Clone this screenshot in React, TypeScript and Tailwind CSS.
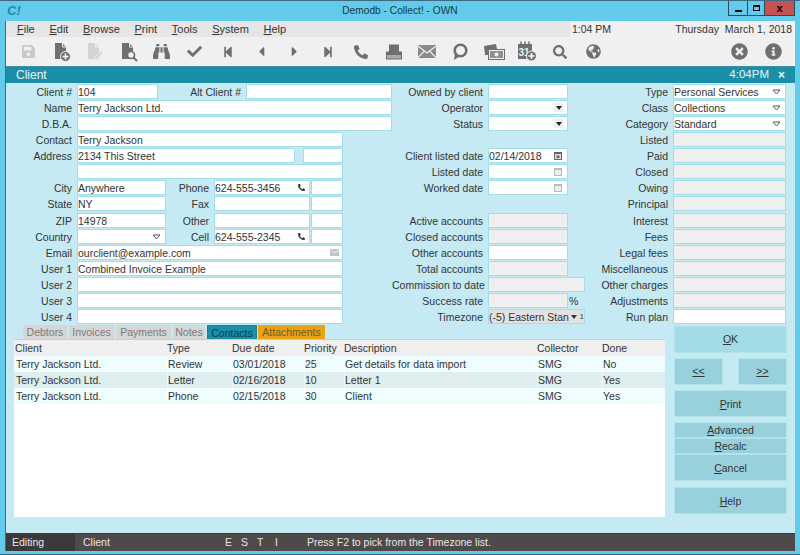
import type { ReactNode } from "react";
import {
  FaBinoculars,
  FaCaretLeft,
  FaCaretRight,
  FaCheck,
  FaGlobeAmericas,
  FaInfoCircle,
  FaPhoneAlt,
  FaSave,
  FaSearch,
  FaStepBackward,
  FaStepForward,
  FaTimesCircle,
} from "react-icons/fa";

const FIELD = "h-[15px] mt-px border border-[#a3dde9] leading-[13px] whitespace-nowrap overflow-hidden flex items-center justify-between";

function Field({ width, value, tone = "white", icon, className = "" }: {
  width: string;
  value?: string;
  tone?: "white" | "gray";
  icon?: ReactNode;
  className?: string;
}) {
  const bg = tone === "white" ? "bg-white" : "bg-[#efefef]";
  return (
    <div className={`${FIELD} ${bg} ${width} ${className}`}>
      <span className="self-start pt-px">{value}</span>
      {icon}
    </div>
  );
}

function Label({ width, children }: { width: string; children?: ReactNode }) {
  return <div className={`${width} shrink-0 text-right pr-[5px] pt-px leading-4 whitespace-nowrap`}>{children}</div>;
}

const Drop = () => (
  <svg width="9" height="6" viewBox="0 0 9 6" className="mr-1 shrink-0"><path d="M1 1h7L4.5 5z" fill="none" stroke="#555" /></svg>
);
const DropDark = () => (
  <span className="mr-1 w-[9px] h-[9px] bg-[#efefef] flex items-center justify-center shrink-0">
    <svg width="6" height="4" viewBox="0 0 6 4"><path d="M0 0h6L3 4z" fill="#222" /></svg>
  </span>
);
const Cal = ({ dark }: { dark?: boolean }) => (
  <svg width="8" height="9" viewBox="0 0 8 9" className="mr-[5px] shrink-0">
    <rect x="0.5" y="1.5" width="7" height="7" fill={dark ? "#ddd" : "#eee"} stroke={dark ? "#666" : "#bbb"} />
    <rect x="0.5" y="1" width="7" height="2" fill={dark ? "#666" : "#bbb"} />
    {dark && <rect x="2.5" y="4.5" width="3" height="2.5" fill="#666" />}
  </svg>
);
const Tel = () => <FaPhoneAlt size={7} className="mr-1 text-[#333] shrink-0" />;
const Mail = () => (
  <svg width="9" height="7" viewBox="0 0 9 7" className="mr-[3px] shrink-0"><rect width="9" height="7" fill="#c4c4c4" /><path d="M0 1l4.5 3L9 1" fill="none" stroke="#eee" /></svg>
);

function LeftRow({ label, children }: { label?: string; children: ReactNode }) {
  return (
    <div className="flex h-4">
      <Label width="w-[71px]">{label}</Label>
      {children}
    </div>
  );
}

function PhoneRow({ label, sub, value, phone, icon }: { label: string; sub: string; value?: string; phone?: string; icon?: ReactNode }) {
  return (
    <LeftRow label={label}>
      <Field width="w-[89px]" value={value} />
      <Label width="w-[48px]">{sub}</Label>
      <Field width="w-[96px]" value={phone} icon={icon} />
      <Field width="w-[32px]" className="ml-px" />
    </LeftRow>
  );
}

function MidRow({ label, children }: { label?: string; children?: ReactNode }) {
  return (
    <div className="flex h-4">
      <Label width="w-[96px]">{label}</Label>
      {children}
    </div>
  );
}

function RightRow({ label, value, tone = "gray", icon }: { label: string; value?: string; tone?: "white" | "gray"; icon?: ReactNode }) {
  return (
    <div className="flex h-4 justify-end">
      <Label width="w-[88px]">{label}</Label>
      <Field width="w-[113px]" value={value} tone={tone} icon={icon} />
    </div>
  );
}

const GRAY = "#6f6f6f";

function DocIcon({ color = GRAY, children }: { color?: string; children?: ReactNode }) {
  return (
    <svg width="20" height="20" viewBox="0 0 20 20">
      <path d="M3 1h7l4 4v12H3z" fill={color} />
      <path d="M10.5 1v4h4" fill="none" stroke="#f0f0f0" />
      {children}
    </svg>
  );
}

const tool_icons: ReactNode[] = [
  <FaSave key="save" size={15} color="#c9c9c9" />,
  <DocIcon key="new">
    <circle cx="13.5" cy="14.5" r="5" fill={GRAY} stroke="#f0f0f0" />
    <path d="M13.5 11.5v6M10.5 14.5h6" stroke="#fff" strokeWidth="1.5" />
  </DocIcon>,
  <DocIcon key="edit" color="#d4d4d4">
    <path d="M9 18l1-3 6-6 2 2-6 6z" fill="#d4d4d4" stroke="#f0f0f0" strokeWidth="0.7" />
  </DocIcon>,
  <DocIcon key="find">
    <circle cx="12" cy="13" r="3.5" fill="#f0f0f0" stroke={GRAY} strokeWidth="1.6" />
    <path d="M14.5 15.5l3.5 3.5" stroke={GRAY} strokeWidth="2" />
  </DocIcon>,
  <FaBinoculars key="bin" size={17} color={GRAY} />,
  <FaCheck key="check" size={15} color={GRAY} />,
  <FaStepBackward key="first" size={12} color={GRAY} />,
  <FaCaretLeft key="prev" size={15} color={GRAY} />,
  <FaCaretRight key="next" size={15} color={GRAY} />,
  <FaStepForward key="last" size={12} color={GRAY} />,
  <FaPhoneAlt key="phone" size={14} color={GRAY} />,
  <svg key="stamp" width="16" height="16" viewBox="0 0 16 16">
    <rect x="3" y="0.5" width="10" height="8" fill={GRAY} />
    <rect x="0.5" y="8" width="15" height="7" fill="#a8a8a8" stroke={GRAY} />
    <rect x="0.5" y="8" width="15" height="3" fill={GRAY} />
  </svg>,
  <svg key="mail" width="18" height="13" viewBox="0 0 18 13">
    <rect width="18" height="13" fill="#8a8a8a" />
    <path d="M0 1l9 7 9-7M0 12.5l6.5-6.5M18 12.5L11.5 6" fill="none" stroke="#f0f0f0" strokeWidth="1.1" />
  </svg>,
  <svg key="chat" width="16" height="18" viewBox="0 0 16 18">
    <circle cx="8.5" cy="7.5" r="5.8" fill="none" stroke={GRAY} strokeWidth="2.6" />
    <path d="M3 10l-1 7 6-4z" fill={GRAY} />
  </svg>,
  <svg key="cards" width="22" height="18" viewBox="0 0 22 18">
    <path d="M1 3l12-2 1 5H5v6H2z" fill={GRAY} />
    <rect x="5.5" y="6.5" width="16" height="10" fill="#f0f0f0" stroke={GRAY} />
    <rect x="7" y="8" width="13" height="7" fill="#909090" />
    <circle cx="13.5" cy="11.5" r="2" fill="#f0f0f0" />
  </svg>,
  <svg key="cal" width="20" height="21" viewBox="0 0 20 21">
    <path d="M1 3h14v15H1z" fill={GRAY} />
    <path d="M4 0.5v4M8 0.5v4M12 0.5v4" stroke={GRAY} strokeWidth="1.5" />
    <text x="1.5" y="14.5" fontSize="10" fontWeight="700" fill="#f0f0f0" fontFamily="Liberation Sans, sans-serif">31</text>
    <circle cx="14.5" cy="15" r="5" fill={GRAY} stroke="#f0f0f0" />
    <path d="M14.5 12v6M11.5 15h6" stroke="#fff" strokeWidth="1.5" />
  </svg>,
  <FaSearch key="search" size={14} color={GRAY} />,
  <FaGlobeAmericas key="globe" size={15} color={GRAY} />,
];

const menu_items = [
  ["F", "ile"],
  ["E", "dit"],
  ["B", "rowse"],
  ["P", "rint"],
  ["T", "ools"],
  ["S", "ystem"],
  ["H", "elp"],
];

const contacts = [
  { client: "Terry Jackson Ltd.", type: "Review", due: "03/01/2018", priority: "25", description: "Get details for data import", collector: "SMG", done: "No", bg: "bg-[#effdfe]" },
  { client: "Terry Jackson Ltd.", type: "Letter", due: "02/16/2018", priority: "10", description: "Letter 1", collector: "SMG", done: "Yes", bg: "bg-[#deeeee]" },
  { client: "Terry Jackson Ltd.", type: "Phone", due: "02/15/2018", priority: "30", description: "Client", collector: "SMG", done: "Yes", bg: "bg-[#effdfe]" },
];

const TABLE_GRID = "grid grid-cols-[152px_65px_72px_40px_193px_65px_63px] h-4 leading-4";

function Tab({ children, tone = "bg-[#d6d6d6] text-[#7a7a7a]", width }: { children: string; tone?: string; width: string }) {
  return <div className={`${tone} ${width} h-[14px] leading-[14px] text-center`}>{children}</div>;
}

function Btn({ children, height, tone = "bg-[#98d0dc]", width = "w-full", className = "" }: { children: ReactNode; height: string; tone?: string; width?: string; className?: string }) {
  return (
    <button className={`${tone} ${height} ${width} ${className} border border-[#b2e2ea] text-[#333] flex items-center justify-center`}>
      {children}
    </button>
  );
}

export default function App() {
  return (
    <div
      className="w-[800px] h-[555px] bg-[#62cbeb] border-t border-[#3d6a80] flex flex-col text-[10.5px] text-[#333] overflow-hidden"
      style={{ fontFamily: '"Liberation Sans", Arial, sans-serif' }}
    >
      {/* title bar */}
      <div className="h-5 grid grid-cols-[1fr_auto_1fr] items-start shrink-0 text-[10.2px] text-[#1b3a44]">
        <div className="pl-[7px] pt-[2px] font-bold italic text-[13px] text-[#1b8ea8] leading-4">C!</div>
        <div className="pt-[2px] leading-4">Demodb - Collect! - OWN</div>
        <div className="flex justify-end pr-[5px]">
          <div className="flex h-[15px] border border-t-0 border-[#2c4a58] text-[11px]">
            <div className="w-[19px] flex items-end justify-center pb-[3px] border-r border-[#2c4a58]"><div className="w-[7px] h-[2px] bg-black" /></div>
            <div className="w-[17px] flex items-center justify-center border-r border-[#2c4a58]"><div className="w-[7px] h-[6px] border border-t-2 border-black" /></div>
            <div className="w-[29px] bg-[#c75050] flex items-center justify-center font-bold text-black leading-none">x</div>
          </div>
        </div>
      </div>

      <div className="mx-[5px] border-l border-[#3d6a80] flex-1 flex flex-col min-h-0">
        {/* menu */}
        <div className="h-4 flex shrink-0 bg-[#f0f0f0]">
          <div className="w-[564px] bg-[#e6e6e6] flex pl-[11px] gap-[14.7px] leading-4 text-[11px]">
            {menu_items.map(([key, rest]) => (
              <span key={key}><span className="underline">{key}</span>{rest}</span>
            ))}
          </div>
          <div className="flex-1 flex justify-between pr-[3px] pl-[2px] leading-4">
            <span>1:04 PM</span>
            <span>Thursday&nbsp; March 1, 2018</span>
          </div>
        </div>

        {/* toolbar */}
        <div className="h-[29px] bg-[#f0f0f0] flex items-center pl-[6.4px] shrink-0">
          {tool_icons.map((icon, i) => (
            <div key={i} className="w-[33.2px] flex items-center justify-center">{icon}</div>
          ))}
          <div className="ml-auto flex gap-[17px] pr-[13px]">
            <FaTimesCircle size={17} color={GRAY} />
            <FaInfoCircle size={17} color={GRAY} />
          </div>
        </div>

        {/* form header */}
        <div className="h-[17px] bg-[#1b8ea8] text-[#e8f8fa] flex items-center justify-between pl-[10px] pr-[10px] text-[12px] shrink-0 border-t border-[#3d8ea5]">
          <span>Client</span>
          <span className="flex items-center gap-[9px]">
            <span className="text-[11.5px]">4:04PM</span>
            <span className="font-bold">×</span>
          </span>
        </div>

        <div className="flex-1 bg-[#c5eaf3] flex flex-col min-h-0">
          {/* fields, the rows below the eighth sit one pixel lower in all three columns */}
          <div className="flex [&>div>*:nth-child(8)]:mb-px">
            <div className="w-[386px] shrink-0">
              <LeftRow label="Client #">
                <Field width="w-[81px]" value="104" />
                <Label width="w-[88px]">Alt Client #</Label>
                <Field width="w-[146px]" />
              </LeftRow>
              <LeftRow label="Name"><Field width="w-[315px]" value="Terry Jackson Ltd." /></LeftRow>
              <LeftRow label="D.B.A."><Field width="w-[315px]" /></LeftRow>
              <LeftRow label="Contact"><Field width="w-[266px]" value="Terry Jackson" /></LeftRow>
              <LeftRow label="Address">
                <Field width="w-[218px]" value="2134 This Street" />
                <Field width="w-[40px]" className="ml-2" />
              </LeftRow>
              <LeftRow><Field width="w-[266px]" /></LeftRow>
              <PhoneRow label="City" value="Anywhere" sub="Phone" phone="624-555-3456" icon={<Tel />} />
              <PhoneRow label="State" value="NY" sub="Fax" />
              <PhoneRow label="ZIP" value="14978" sub="Other" />
              <LeftRow label="Country">
                <Field width="w-[89px]" icon={<Drop />} />
                <Label width="w-[48px]">Cell</Label>
                <Field width="w-[96px]" value="624-555-2345" icon={<Tel />} />
                <Field width="w-[32px]" className="ml-px" />
              </LeftRow>
              <LeftRow label="Email"><Field width="w-[266px]" value="ourclient@example.com" icon={<Mail />} /></LeftRow>
              <LeftRow label="User 1"><Field width="w-[266px]" value="Combined Invoice Example" /></LeftRow>
              <LeftRow label="User 2"><Field width="w-[266px]" /></LeftRow>
              <LeftRow label="User 3"><Field width="w-[266px]" /></LeftRow>
              <LeftRow label="User 4"><Field width="w-[266px]" /></LeftRow>
            </div>

            <div className="w-[193px] shrink-0">
              <MidRow label="Owned by client"><Field width="w-[80px]" /></MidRow>
              <MidRow label="Operator"><Field width="w-[80px]" icon={<DropDark />} /></MidRow>
              <MidRow label="Status"><Field width="w-[80px]" icon={<DropDark />} /></MidRow>
              <MidRow />
              <MidRow label="Client listed date"><Field width="w-[80px]" value="02/14/2018" icon={<Cal dark />} /></MidRow>
              <MidRow label="Listed date"><Field width="w-[80px]" icon={<Cal />} /></MidRow>
              <MidRow label="Worked date"><Field width="w-[80px]" icon={<Cal />} /></MidRow>
              <MidRow />
              <MidRow label="Active accounts"><Field width="w-[80px]" tone="gray" /></MidRow>
              <MidRow label="Closed accounts"><Field width="w-[80px]" tone="gray" /></MidRow>
              <MidRow label="Other accounts"><Field width="w-[80px]" /></MidRow>
              <MidRow label="Total accounts"><Field width="w-[80px]" tone="gray" /></MidRow>
              <MidRow label="Commission to date"><Field width="w-[97px]" tone="gray" /></MidRow>
              <MidRow label="Success rate">
                <Field width="w-[80px]" tone="gray" />
                <span className="ml-px pt-px leading-4">%</span>
              </MidRow>
              <MidRow label="Timezone">
                <div className={`${FIELD} w-[97px] bg-[#e2e2e2] border-[#8fc6d3]`}>
                  <span className="self-start pt-px overflow-hidden">(-5) Eastern Stan</span>
                  <svg width="8" height="6" viewBox="0 0 8 6" className="shrink-0"><path d="M1 1h6L4 5z" fill="#333" /></svg>
                  <span className="shrink-0 text-[8px]">1</span>
                </div>
              </MidRow>
            </div>

            <div className="w-[201px] shrink-0">
              <RightRow label="Type" value="Personal Services" tone="white" icon={<Drop />} />
              <RightRow label="Class" value="Collections" tone="white" icon={<Drop />} />
              <RightRow label="Category" value="Standard" tone="white" icon={<Drop />} />
              {["Listed", "Paid", "Closed", "Owing", "Principal", "Interest", "Fees", "Legal fees", "Miscellaneous", "Other charges", "Adjustments"].map((label) => (
                <RightRow key={label} label={label} />
              ))}
              <RightRow label="Run plan" tone="white" />
            </div>
          </div>

          {/* contacts + buttons */}
          <div className="flex flex-1 min-h-0">
            <div className="w-[663px] shrink-0 flex flex-col">
              <div className="flex gap-[2px] pl-[17px] mt-px">
                <Tab width="w-[44px]">Debtors</Tab>
                <Tab width="w-[45px]">Invoices</Tab>
                <Tab width="w-[55px]">Payments</Tab>
                <Tab width="w-[32px]">Notes</Tab>
                <Tab width="w-[50px]" tone="bg-[#1b8ea8] text-[#0f3a46] border-t border-x border-[#1b7f97] leading-[12px]">Contacts</Tab>
                <Tab width="w-[67px]" tone="bg-[#e8a317] text-[#6f5a25] -ml-px">Attachments</Tab>
              </div>
              <div className="ml-[8px] w-[651px] h-[178px] bg-white border-t border-[#a3dde9]">
                <div className={`${TABLE_GRID} bg-[#efefef] pl-px`}>
                  <span>Client</span>
                  <span>Type</span>
                  <span>Due date</span>
                  <span>Priority</span>
                  <span>Description</span>
                  <span>Collector</span>
                  <span>Done</span>
                </div>
                {contacts.map((row) => (
                  <div key={row.due} className={`${TABLE_GRID} ${row.bg} pl-[2px] [&>span:not(:last-child)]:border-r [&>span:not(:last-child)]:border-white/60`}>
                    <span>{row.client}</span>
                    <span>{row.type}</span>
                    <span>{row.due}</span>
                    <span>{row.priority}</span>
                    <span>{row.description}</span>
                    <span>{row.collector}</span>
                    <span>{row.done}</span>
                  </div>
                ))}
              </div>
            </div>

            <div className="w-[113px] shrink-0 ml-[5px] pt-[2px] flex flex-col">
              <Btn height="h-[27px]" tone="bg-[#a3dce6]"><span><u>O</u>K</span></Btn>
              <div className="flex justify-between mt-[5px]">
                <Btn height="h-[27px]" width="w-[49px]"><u>&lt;&lt;</u></Btn>
                <Btn height="h-[27px]" width="w-[49px]"><u>&gt;&gt;</u></Btn>
              </div>
              <Btn height="h-[27px]" className="mt-[5px] pt-[2px]"><span><u>P</u>rint</span></Btn>
              <Btn height="h-4" className="mt-[5px] pt-[2px]"><span><u>A</u>dvanced</span></Btn>
              <Btn height="h-4" className="pt-[2px]"><span><u>R</u>ecalc</span></Btn>
              <Btn height="h-[27px]" className="pt-[2px]"><span><u>C</u>ancel</span></Btn>
              <Btn height="h-[27px]" className="mt-[6px] pt-[2px]"><span><u>H</u>elp</span></Btn>
            </div>
          </div>
        </div>

        {/* status bar */}
        <div className="h-[18px] bg-[#4d4a49] text-[#e6e6e6] flex items-center shrink-0 border-t border-[#3a3a38] text-[10.5px]">
          <div className="w-[69px] h-full bg-[#3a3a38] pl-[6px] leading-[17px]">Editing</div>
          <div className="w-[147px] pl-[8px]">Client</div>
          <div className="w-[85px] pl-[3px] grid grid-cols-[16px_16px_16px_16px]">
            <span>E</span><span>S</span><span>T</span><span className="pl-[2px]">I</span>
          </div>
          <div>Press F2 to pick from the Timezone list.</div>
        </div>
      </div>
      <div className="h-[3px] bg-[#62cbeb] shrink-0" />
      <div className="h-px bg-[#3d6a80] shrink-0" />
    </div>
  );
}
